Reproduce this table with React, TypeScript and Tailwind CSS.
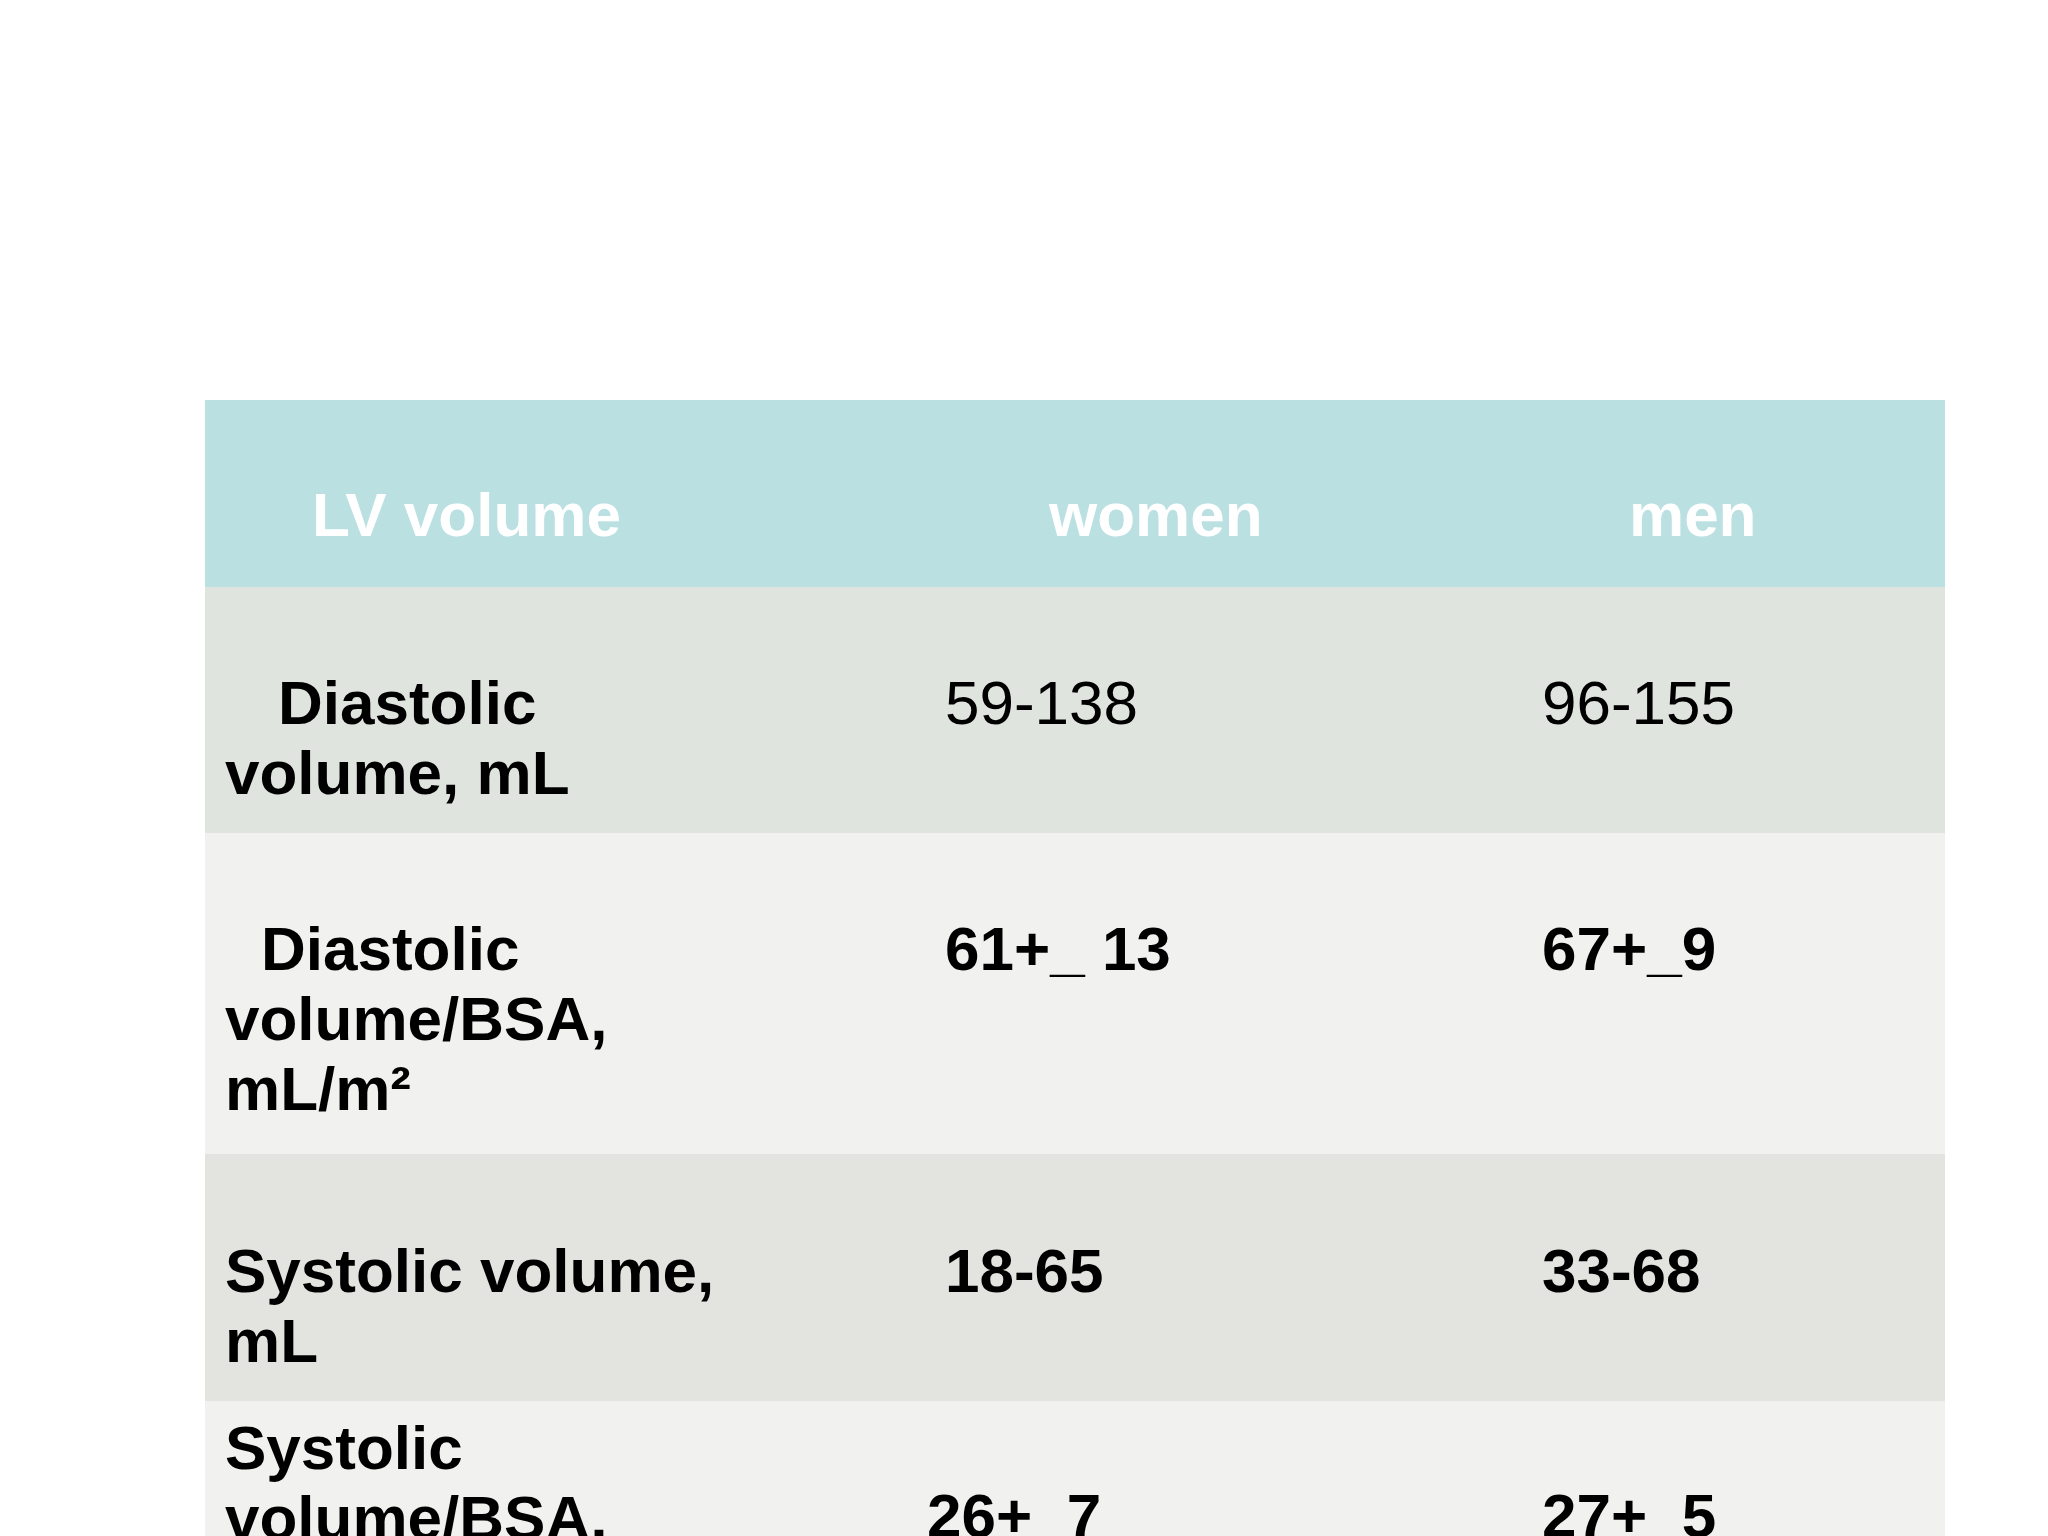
type Line = { text: string; indent?: number }

type Cell = {
  lines: Line[]
  bold?: boolean
  top: string
  pad: string
}

type Row = {
  bg: string
  height: string
  cells: Cell[]
}

const rows: Row[] = [
  {
    bg: 'bg-[#e0e4df]',
    height: 'h-[246px]',
    cells: [
      {
        lines: [{ text: 'Diastolic', indent: 53 }, { text: 'volume, mL' }],
        bold: true,
        top: 'pt-[81px]',
        pad: 'pl-[20px]',
      },
      { lines: [{ text: '59-138' }], top: 'pt-[81px]', pad: 'pl-[22px]' },
      { lines: [{ text: '96-155' }], top: 'pt-[81px]', pad: 'pl-[22px]' },
    ],
  },
  {
    bg: 'bg-[#f1f1ef]',
    height: 'h-[321px]',
    cells: [
      {
        lines: [
          { text: 'Diastolic', indent: 36 },
          { text: 'volume/BSA,' },
          { text: 'mL/m²' },
        ],
        bold: true,
        top: 'pt-[81px]',
        pad: 'pl-[20px]',
      },
      { lines: [{ text: '61+_ 13' }], bold: true, top: 'pt-[81px]', pad: 'pl-[22px]' },
      { lines: [{ text: '67+_9' }], bold: true, top: 'pt-[81px]', pad: 'pl-[22px]' },
    ],
  },
  {
    bg: 'bg-[#e3e3df]',
    height: 'h-[247px]',
    cells: [
      {
        lines: [{ text: 'Systolic volume,' }, { text: 'mL' }],
        bold: true,
        top: 'pt-[82px]',
        pad: 'pl-[20px]',
      },
      { lines: [{ text: '18-65' }], bold: true, top: 'pt-[82px]', pad: 'pl-[22px]' },
      { lines: [{ text: '33-68' }], bold: true, top: 'pt-[82px]', pad: 'pl-[22px]' },
    ],
  },
  {
    bg: 'bg-[#f1f1ef]',
    height: 'h-[300px]',
    cells: [
      {
        lines: [{ text: 'Systolic' }, { text: 'volume/BSA,' }, { text: 'mL/m²' }],
        bold: true,
        top: 'pt-[12px]',
        pad: 'pl-[20px]',
      },
      { lines: [{ text: '26+_7' }], bold: true, top: 'pt-[80px]', pad: 'pl-[4px]' },
      { lines: [{ text: '27+_5' }], bold: true, top: 'pt-[80px]', pad: 'pl-[22px]' },
    ],
  },
]

export default function App() {
  return (
    <div className="h-[1536px] w-[2048px] overflow-hidden bg-white font-['Liberation_Sans',Arial,sans-serif] text-[62px] leading-[70px] text-black">
      <div className="ml-[205px] mt-[400px] w-[1740px]">
        {/* Header */}
        <div className="grid h-[187px] grid-cols-[718px_597px_425px] bg-[#bae0e2] font-bold text-white">
          <div className="pl-[107px] pt-[80px]">LV volume</div>
          <div className="pl-[126px] pt-[80px]">women</div>
          <div className="pl-[109px] pt-[80px]">men</div>
        </div>

        {rows.map((row, i) => (
          <div key={i} className={`grid grid-cols-[718px_597px_425px] ${row.bg} ${row.height}`}>
            {row.cells.map((cell, j) => (
              <div key={j} className={`${cell.top} ${cell.pad} ${cell.bold ? 'font-bold' : 'font-normal'}`}>
                {cell.lines.map((line, k) => (
                  <div key={k} className="whitespace-nowrap" style={{ paddingLeft: line.indent ?? 0 }}>
                    {line.text}
                  </div>
                ))}
              </div>
            ))}
          </div>
        ))}
      </div>
    </div>
  )
}
